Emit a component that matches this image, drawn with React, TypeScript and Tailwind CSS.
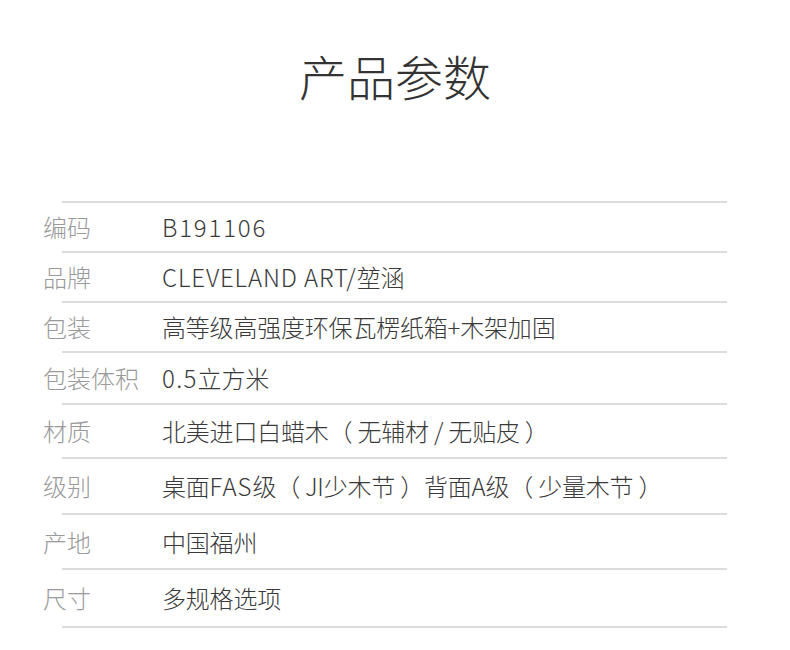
import React from "react";

const L = ({ children, t = "tracking-[1px]" }: { children: React.ReactNode; t?: string }) => (
  <span className={t}>{children}</span>
);

const rows: { label: string; value: React.ReactNode; h: string }[] = [
  { label: "编码", value: <L t="tracking-[1.8px]">B191106</L>, h: "h-[48px]" },
  { label: "品牌", value: <><L t="tracking-[0.85px]">CLEVELAND ART/</L>堃涵</>, h: "h-[48px]" },
  { label: "包装", value: "高等级高强度环保瓦楞纸箱+木架加固", h: "h-[48px]" },
  { label: "包装体积", value: <><L t="tracking-[1.3px]">0.5</L>立方米</>, h: "h-[50px]" },
  { label: "材质", value: "北美进口白蜡木（ 无辅材 / 无贴皮 ）", h: "h-[52px]" },
  { label: "级别", value: <>桌面<L>FAS</L>级（ JI少木节 ）背面A级（ 少量木节 ）</>, h: "h-[54px]" },
  { label: "产地", value: "中国福州", h: "h-[53px]" },
  { label: "尺寸", value: "多规格选项", h: "h-[56px]" },
];

function Line() {
  return <div className="ml-[62px] w-[665px] h-[2px] bg-[#dcdcdc]" />;
}

export default function App() {
  return (
    <div
      className="w-[790px] h-[650px] bg-white overflow-hidden"
      style={{ fontFamily: '"Noto Sans CJK SC", "Noto Sans", sans-serif' }}
    >
      <div className="pt-[45px] h-[201px]">
        <div className="text-center text-[48px] leading-[60px] text-[#333333] font-light">
          产品参数
        </div>
      </div>
      <Line />
      {rows.map((r) => (
        <React.Fragment key={r.label}>
          <div className={`flex items-center pl-[43px] ${r.h}`}>
            <div className="w-[119px] shrink-0 text-[24px] leading-none text-[#9a9a9a] font-light whitespace-nowrap">
              {r.label}
            </div>
            <div className="text-[24px] leading-none text-[#3a3a3a] font-light whitespace-nowrap tracking-[-0.2px]">
              {r.value}
            </div>
          </div>
          <Line />
        </React.Fragment>
      ))}
    </div>
  );
}
